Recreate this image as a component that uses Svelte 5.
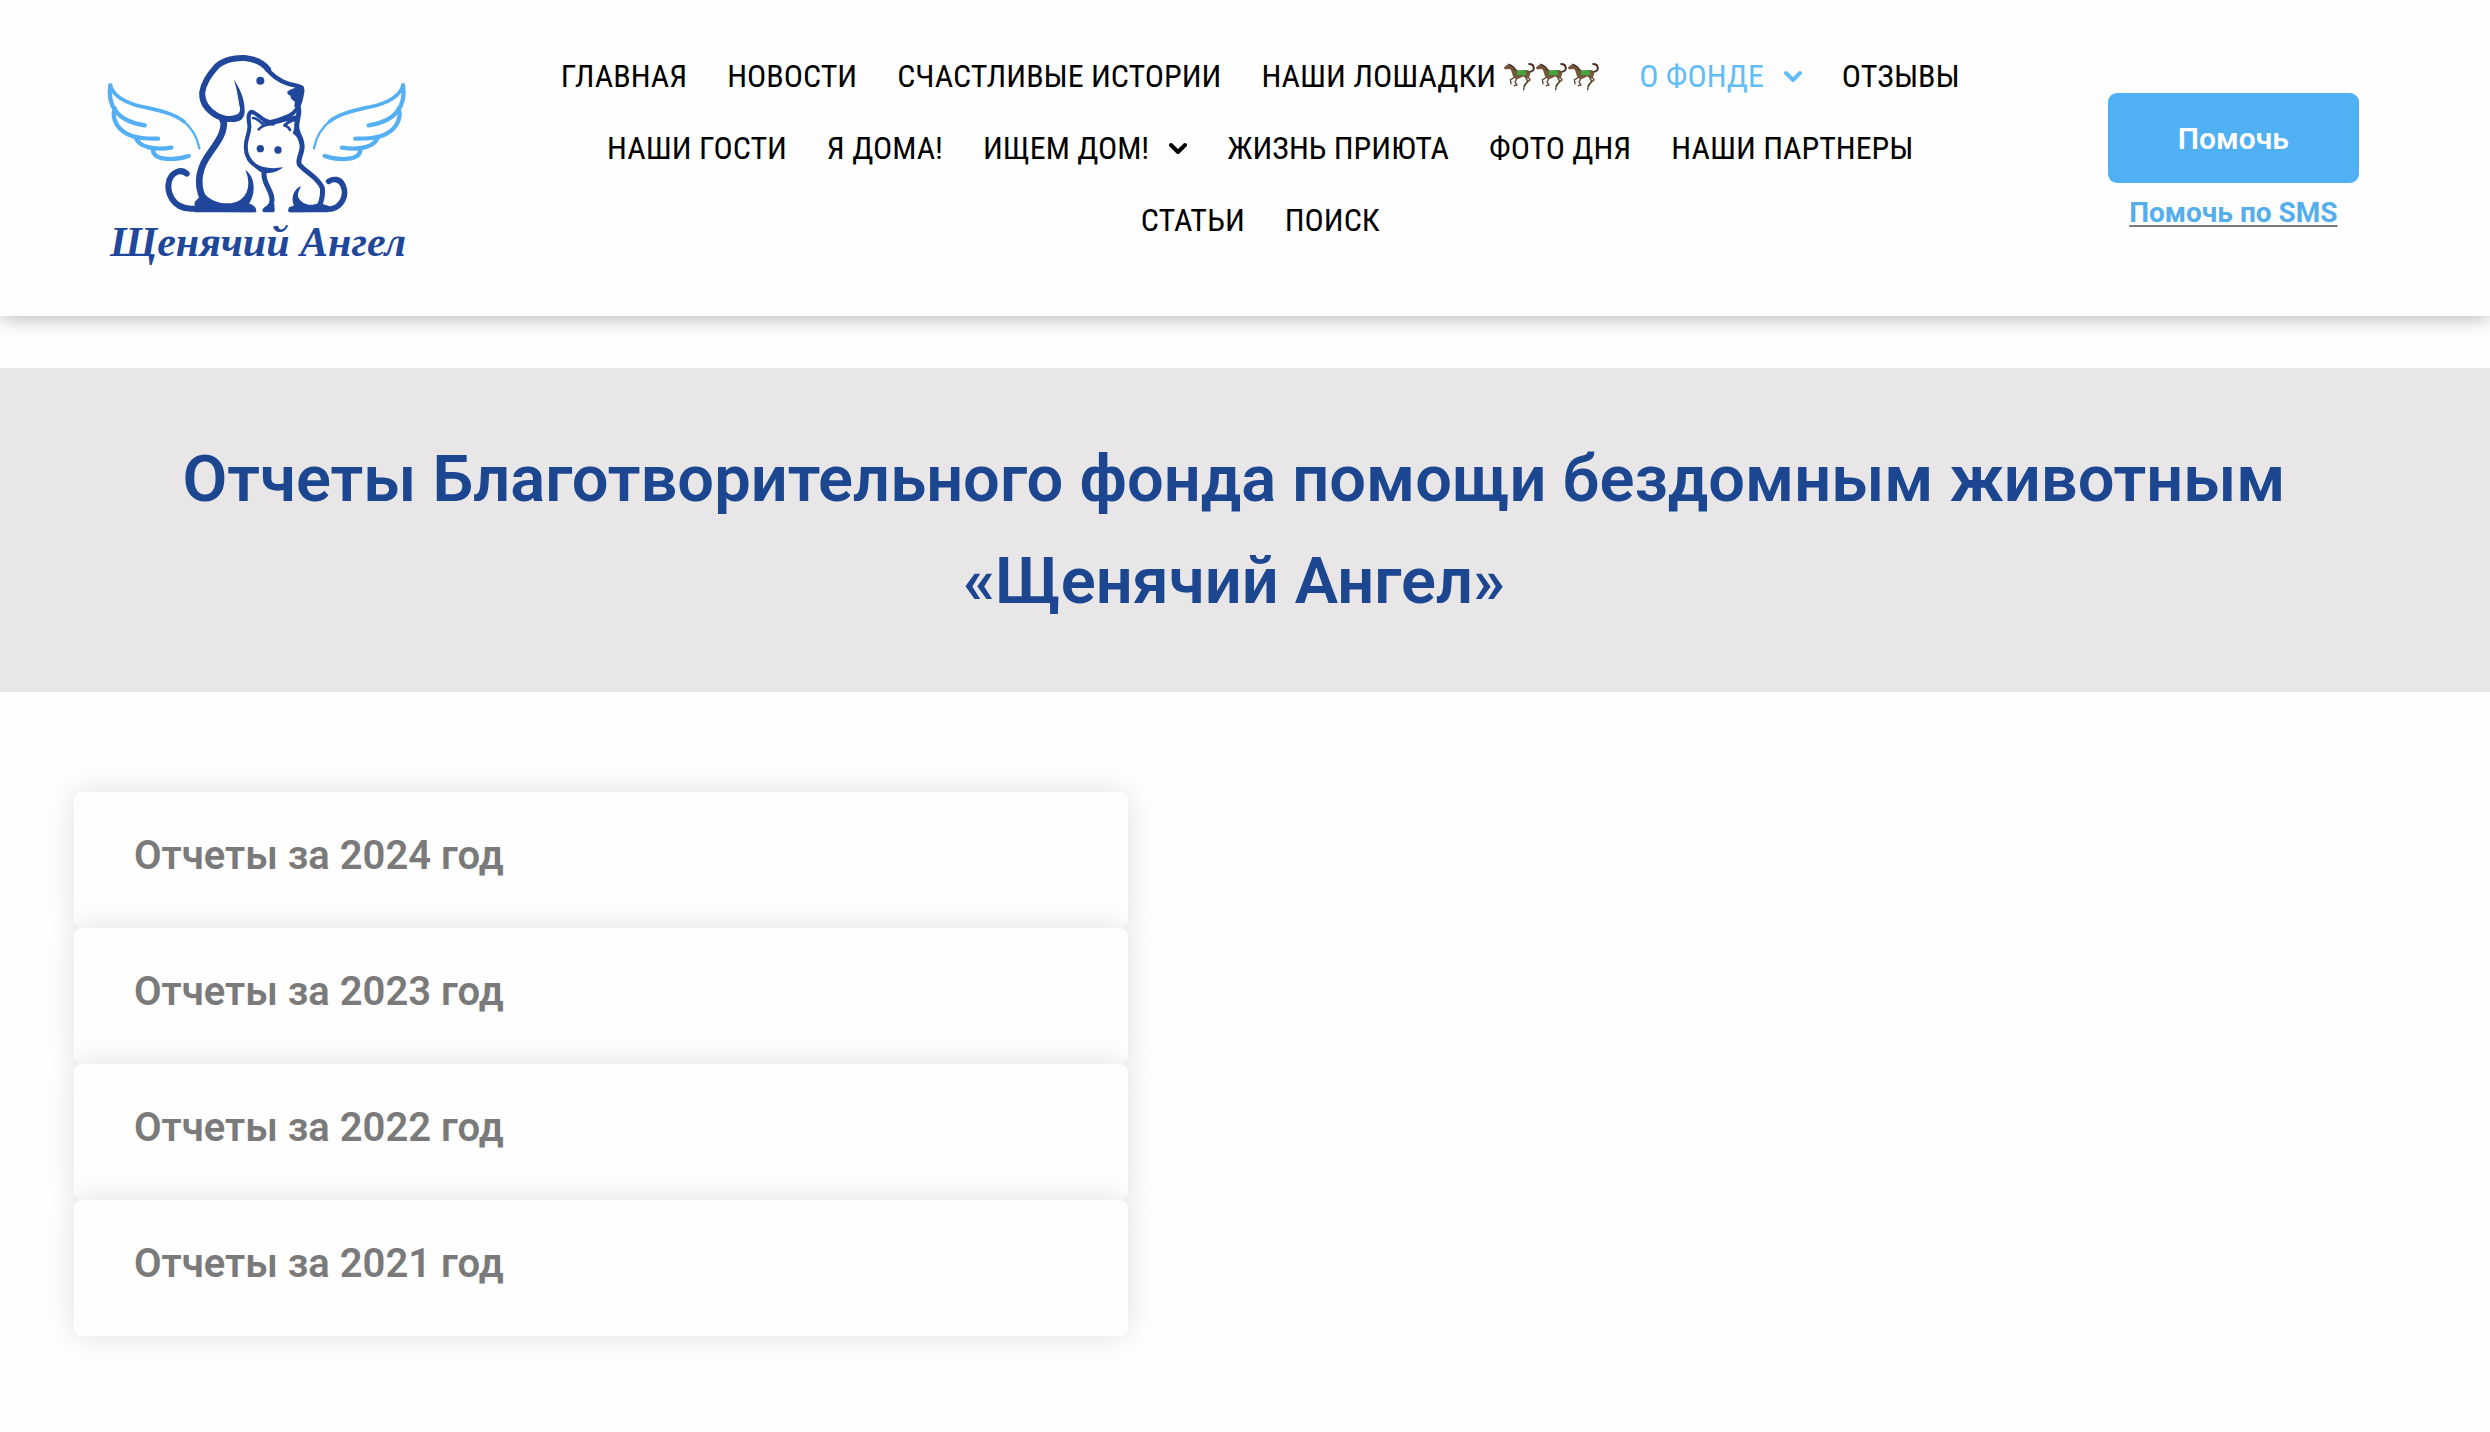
<script>
	const menu = [
		{ label: 'Главная' },
		{ label: 'Новости' },
		{ label: 'Счастливые истории' },
		{ label: 'Наши лошадки', horses: 3 },
		{ label: 'О фонде', active: true, submenu: true },
		{ label: 'Отзывы' },
		{ label: 'Наши гости' },
		{ label: 'Я дома!' },
		{ label: 'Ищем дом!', submenu: true },
		{ label: 'Жизнь приюта' },
		{ label: 'Фото дня' },
		{ label: 'Наши партнеры' },
		{ label: 'Статьи' },
		{ label: 'Поиск' }
	];

	const years = [2024, 2023, 2022, 2021];

	let opened = $state(null);

	function toggle(year) {
		opened = opened === year ? null : year;
	}
</script>

{#snippet wing()}
	<path d="M67 136C74 162 100 182 140 194C190 208 250 214 288 245" stroke-width="11" />
	<path d="M280 238C312 262 328 292 334 325" stroke-width="7" />
	<path d="M67 136C62 168 68 194 84 214C100 236 132 250 170 256" />
	<path d="M80 205C70 240 90 272 132 288C160 297 186 296 210 296" />
	<path d="M143 292C152 320 196 332 250 323" />
	<path d="M195 328C194 360 252 364 302 348" />
{/snippet}

{#snippet horse()}
	<svg class="horse" viewBox="0 0 96 88" aria-hidden="true">
		<g fill="none" stroke="#5b4029" stroke-linecap="round" stroke-linejoin="round">
			<path d="M79 30C90 30 95 22 92 14C90 8 84 6 79 6" stroke="#4b2d22" stroke-width="6" />
			<path d="M36 46L22 54L24 66" stroke-width="4" />
			<path d="M42 48L36 62L42 70L34 72" stroke-width="4" />
			<path d="M74 44L82 54L68 66L64 72" stroke-width="4" />
			<path d="M68 46L74 58L64 74L62 84" stroke-width="4" />
		</g>
		<path
			fill="#76553a"
			d="M2 17L14 7L17 4L20 8C29 10 35 19 40 24C52 28 66 22 77 26C85 31 82 42 76 49C70 53 65 45 60 44C52 49 43 54 35 49C27 43 28 31 22 22C16 20 10 23 5 22Z"
		/>
		<path fill="#3f281f" d="M18 6C30 8 36 18 42 25L36 26C32 18 26 13 18 10Z" />
		<path fill="#45a13c" d="M41 25C51 29 60 23 68 24L70 39C62 44 52 38 42 42Z" />
	</svg>
{/snippet}

<header>
	<a class="logo" href="/" aria-label="Щенячий Ангел">
		<svg viewBox="0 0 1020 540" aria-hidden="true">
			<g class="wings">
				{@render wing()}
				<g transform="translate(1012) scale(-1 1)">{@render wing()}</g>
			</g>
			<g class="lines">
				<!-- dog -->
				<path
					d="M450 232C432 240 408 238 385 226C355 208 340 185 343 155C348 125 362 105 385 80C405 60 440 52 470 54C500 57 525 68 540 88"
					stroke-width="18"
				/>
				<path d="M536 84C552 110 575 122 600 131C615 136 630 137 641 143" stroke-width="13" />
				<path d="M636 180C632 205 620 218 606 226C585 235 562 245 545 246C520 242 508 218 490 215" stroke-width="12" />
				<path d="M632 205C636 230 622 245 627 268C632 290 645 300 642 325C640 345 628 360 634 373C650 396 690 410 703 444C706 466 702 480 694 498" stroke-width="15" />
				<path d="M407 240C412 285 380 315 355 355C330 395 322 450 358 494" stroke-width="20" />
				<path d="M296 401C280 386 255 394 244 420C234 454 252 506 310 506L494 508" stroke-width="18" />
				<!-- cat -->
				<path d="M490 216C478 220 482 240 484 256C486 275 476 290 474 310C470 345 485 368 510 382" stroke-width="12" />
				<path d="M495 234C506 234 514 242 524 252" stroke-width="8" />
				<path d="M512 268C524 256 540 252 556 253" stroke-width="8" />
				<path d="M590 256C600 246 612 240 624 240" stroke-width="9" />
				<path d="M592 257C600 261 604 264 606 270" stroke-width="8" />
				<path d="M528 396C524 432 553 450 552 480C551 496 545 504 536 508" stroke-width="15" />
				<path d="M610 508L730 507C762 500 778 466 765 436C755 414 735 416 722 424" stroke-width="17" />
			</g>
			<g class="fills">
				<path d="M437 118C448 150 451 180 456 205C458 222 444 228 428 229L432 246C460 246 470 234 470 212C470 175 455 145 437 118Z" />
				<path d="M598 155C608 147 626 144 632 136C645 134 651 142 649 156C646 175 642 192 634 206L619 200C619 191 623 187 618 183C610 178 606 172 608 167C600 165 597 160 598 155Z" />
				<path d="M388 230L432 232L414 250L404 262Z" />
				<path d="M524 236C545 245 585 238 622 226L634 240C600 238 580 250 545 256C530 256 520 246 524 236Z" />
				<path d="M500 370C525 386 560 387 586 381C570 396 548 401 528 399C512 396 500 384 500 370Z" />
				<path d="M346 458C366 480 388 489 416 490C446 491 470 477 478 450C484 428 480 408 472 391C492 402 500 430 496 456C494 474 486 484 484 491C498 494 505 504 505 517L320 517L320 486Z" />
				<path d="M523 514C523 502 535 500 541 492L559 492L560 511C560 516 557 517 552 517L528 517Z" />
				<path d="M600 514C601 504 610 503 618 496C610 480 612 450 639 438C634 452 626 462 632 474C642 493 670 501 692 488L730 500L720 517L605 517Z" />
				<path d="M620 262L630 262C634 285 644 296 646 310L634 312C632 294 622 286 614 280Z" />
				<circle cx="517" cy="122" r="12" />
				<circle cx="517" cy="326" r="11" />
				<circle cx="570" cy="330" r="11" />
			</g>
		</svg>
		<span>Щенячий Ангел</span>
	</a>

	<nav>
		<ul>
			{#each menu as item}
				<li>
					<a href="#menu" class:active={item.active}>
						{item.label}
						{#if item.horses}
							<span class="herd">
								{#each { length: item.horses } as _}{@render horse()}{/each}
							</span>
						{/if}
						{#if item.submenu}
							<svg class="chevron" viewBox="0 0 18 12" aria-hidden="true">
								<path d="M2 3L9 10L16 3" />
							</svg>
						{/if}
					</a>
				</li>
			{/each}
		</ul>
	</nav>

	<div class="help">
		<button type="button">Помочь</button>
		<a href="#sms">Помочь по SMS</a>
	</div>
</header>

<main>
	<section class="banner">
		<h1>Отчеты Благотворительного фонда помощи бездомным животным «Щенячий Ангел»</h1>
	</section>

	<section class="reports">
		{#each years as year}
			<h2>
				<button type="button" aria-expanded={opened === year} onclick={() => toggle(year)}>
					Отчеты за {year} год
				</button>
			</h2>
		{/each}
	</section>
</main>

<style>
	:global(body) {
		background: #fefefe;
		font-family: Roboto, sans-serif;
	}

	header {
		display: grid;
		grid-template-columns: 21.4% 59% 1fr;
		padding: 40px 14px 52px 0;
		background: #fefefe;
		box-shadow: 0 0 20px rgba(0, 0, 0, 0.34);
	}

	.logo {
		display: flex;
		flex-direction: column;
		align-items: center;
		width: 340px;
		margin-left: 88px;
		color: #20479b;
		font: italic bold 42px/44px 'Liberation Serif', serif;
		text-decoration: none;
		white-space: nowrap;
	}

	.logo svg {
		width: 100%;
	}

	.wings,
	.lines {
		fill: none;
		stroke: #20479b;
		stroke-linecap: round;
		stroke-linejoin: round;
	}

	.wings {
		stroke: #55aff5;
		stroke-width: 13px;
	}

	.fills {
		fill: #20479b;
	}

	ul {
		display: flex;
		flex-wrap: wrap;
		justify-content: center;
		margin: 0;
		padding: 0;
		list-style: none;
	}

	nav a {
		display: flex;
		align-items: center;
		padding: 0 20px;
		color: #000;
		font-family: 'Roboto Condensed', Roboto, sans-serif;
		font-size: 32px;
		line-height: 72px;
		text-transform: uppercase;
		text-decoration: none;
	}

	nav a.active {
		color: #61bdf7;
	}

	.herd {
		display: flex;
		margin-left: 7px;
	}

	.horse {
		width: 32px;
		height: 29px;
	}

	.chevron {
		width: 18px;
		height: 12px;
		margin-left: 20px;
		fill: none;
		stroke: currentColor;
		stroke-width: 4px;
		stroke-linecap: round;
		stroke-linejoin: round;
	}

	.help {
		display: flex;
		flex-direction: column;
		align-items: center;
		padding-top: 53px;
	}

	.help button {
		height: 90px;
		padding: 0 70px;
		border: 0;
		border-radius: 9px;
		background: #50b0f4;
		color: #fff;
		font: 600 30px Roboto, sans-serif;
		cursor: pointer;
	}

	.help a {
		margin-top: 12px;
		color: #54aeec;
		font-size: 28px;
		font-weight: 700;
		line-height: 36px;
		text-decoration: underline #7a7a7a 2px;
		text-underline-offset: 3px;
		text-decoration-skip-ink: none;
	}

	.banner {
		margin-top: 52px;
		padding: 60px 22px 60px 0;
		background: #e8e6e7;
	}

	h1 {
		max-width: 2200px;
		margin: 0 auto;
		color: #1c468f;
		font-size: 65px;
		font-weight: 600;
		line-height: 102px;
		text-align: center;
	}

	.reports {
		display: flex;
		flex-direction: column;
		padding: 100px 74px 90px;
	}

	h2 {
		width: 45%;
		margin: 0;
		border-radius: 8px;
		background: #fefefe;
		box-shadow: 0 0 30px rgba(0, 0, 0, 0.12);
	}

	h2 button {
		width: 100%;
		padding: 38px 60px 46px;
		border: 0;
		background: none;
		color: #7a7a7a;
		font: 600 40px/52px Roboto, sans-serif;
		text-align: left;
		cursor: pointer;
	}
</style>
